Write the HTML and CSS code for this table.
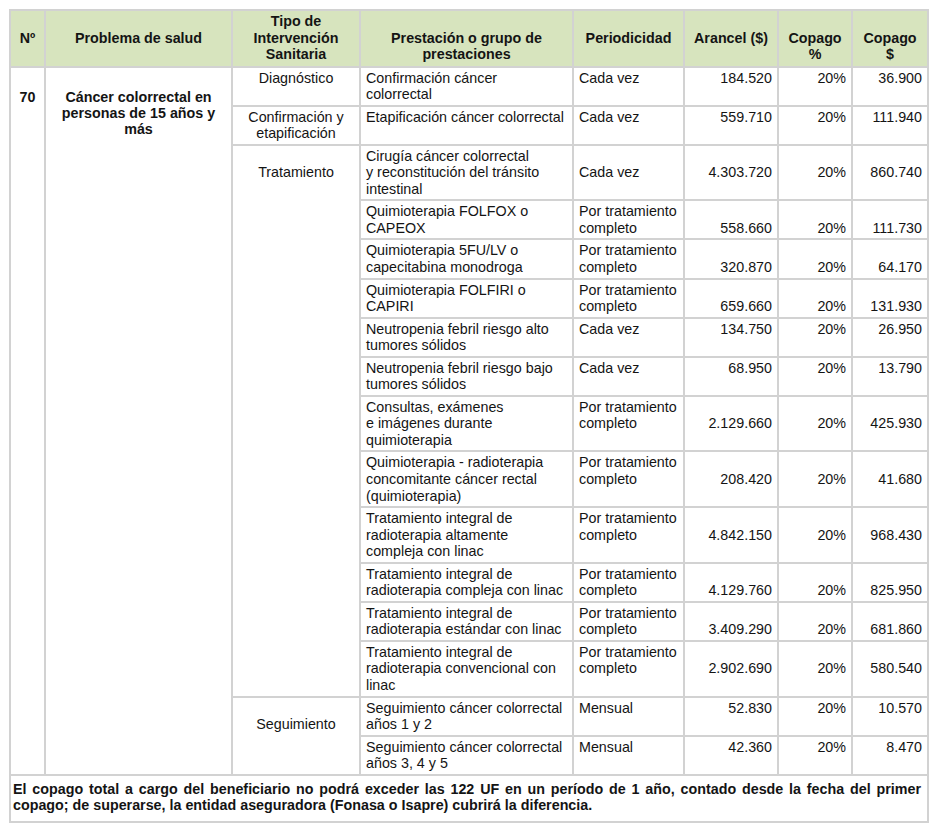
FILE: index.html
```html
<!DOCTYPE html>
<html lang="es">
<head>
<meta charset="utf-8">
<link rel="stylesheet" href="styles.css">
</head>
<body>
<table class="ges">
<colgroup>
<col class="c-n"><col class="c-prob"><col class="c-tipo"><col class="c-prest"><col class="c-per"><col class="c-ar"><col class="c-pct"><col class="c-cop">
</colgroup>
<thead>
<tr>
<th>Nº</th>
<th>Problema de salud</th>
<th>Tipo de<br>Intervención<br>Sanitaria</th>
<th class="bot">Prestación o grupo de<br>prestaciones</th>
<th>Periodicidad</th>
<th>Arancel ($)</th>
<th class="bot">Copago<br>%</th>
<th class="bot">Copago<br>$</th>
</tr>
</thead>
<tbody>
<tr>
<td rowspan="16" class="num-ps">70</td>
<td rowspan="16" class="prob">Cáncer colorrectal en<br>personas de 15 años y<br>más</td>
<td class="tipo">Diagnóstico</td>
<td>Confirmación cáncer<br>colorrectal</td>
<td>Cada vez</td>
<td class="r">184.520</td>
<td class="r">20%</td>
<td class="r">36.900</td>
</tr>
<tr>
<td class="tipo">Confirmación y<br>etapificación</td>
<td>Etapificación cáncer colorrectal</td>
<td>Cada vez</td>
<td class="r">559.710</td>
<td class="r">20%</td>
<td class="r">111.940</td>
</tr>
<tr>
<td rowspan="12" class="tipo"><br>Tratamiento</td>
<td>Cirugía cáncer colorrectal<br>y reconstitución del tránsito<br>intestinal</td>
<td><br>Cada vez</td>
<td class="r"><br>4.303.720</td>
<td class="r"><br>20%</td>
<td class="r"><br>860.740</td>
</tr>
<tr>
<td>Quimioterapia FOLFOX o<br>CAPEOX</td>
<td>Por tratamiento<br>completo</td>
<td class="r"><br>558.660</td>
<td class="r"><br>20%</td>
<td class="r"><br>111.730</td>
</tr>
<tr>
<td>Quimioterapia 5FU/LV o<br>capecitabina monodroga</td>
<td>Por tratamiento<br>completo</td>
<td class="r"><br>320.870</td>
<td class="r"><br>20%</td>
<td class="r"><br>64.170</td>
</tr>
<tr>
<td>Quimioterapia FOLFIRI o<br>CAPIRI</td>
<td>Por tratamiento<br>completo</td>
<td class="r"><br>659.660</td>
<td class="r"><br>20%</td>
<td class="r"><br>131.930</td>
</tr>
<tr>
<td>Neutropenia febril riesgo alto<br>tumores sólidos</td>
<td>Cada vez</td>
<td class="r">134.750</td>
<td class="r">20%</td>
<td class="r">26.950</td>
</tr>
<tr>
<td>Neutropenia febril riesgo bajo<br>tumores sólidos</td>
<td>Cada vez</td>
<td class="r">68.950</td>
<td class="r">20%</td>
<td class="r">13.790</td>
</tr>
<tr>
<td>Consultas, exámenes<br>e imágenes durante<br>quimioterapia</td>
<td>Por tratamiento<br>completo</td>
<td class="r"><br>2.129.660</td>
<td class="r"><br>20%</td>
<td class="r"><br>425.930</td>
</tr>
<tr>
<td>Quimioterapia - radioterapia<br>concomitante cáncer rectal<br>(quimioterapia)</td>
<td>Por tratamiento<br>completo</td>
<td class="r"><br>208.420</td>
<td class="r"><br>20%</td>
<td class="r"><br>41.680</td>
</tr>
<tr>
<td>Tratamiento integral de<br>radioterapia altamente<br>compleja con linac</td>
<td>Por tratamiento<br>completo</td>
<td class="r"><br>4.842.150</td>
<td class="r"><br>20%</td>
<td class="r"><br>968.430</td>
</tr>
<tr>
<td>Tratamiento integral de<br>radioterapia compleja con linac</td>
<td>Por tratamiento<br>completo</td>
<td class="r"><br>4.129.760</td>
<td class="r"><br>20%</td>
<td class="r"><br>825.950</td>
</tr>
<tr>
<td>Tratamiento integral de<br>radioterapia estándar con linac</td>
<td>Por tratamiento<br>completo</td>
<td class="r"><br>3.409.290</td>
<td class="r"><br>20%</td>
<td class="r"><br>681.860</td>
</tr>
<tr>
<td>Tratamiento integral de<br>radioterapia convencional con<br>linac</td>
<td>Por tratamiento<br>completo</td>
<td class="r"><br>2.902.690</td>
<td class="r"><br>20%</td>
<td class="r"><br>580.540</td>
</tr>
<tr>
<td rowspan="2" class="tipo"><br>Seguimiento</td>
<td>Seguimiento cáncer colorrectal<br>años 1 y 2</td>
<td>Mensual</td>
<td class="r">52.830</td>
<td class="r">20%</td>
<td class="r">10.570</td>
</tr>
<tr>
<td>Seguimiento cáncer colorrectal<br>años 3, 4 y 5</td>
<td>Mensual</td>
<td class="r">42.360</td>
<td class="r">20%</td>
<td class="r">8.470</td>
</tr>
</tbody>
<tfoot>
<tr>
<td colspan="8" class="note">
<span class="note-line just">El copago total a cargo del beneficiario no podrá exceder las 122 UF en un período de 1 año, contado desde la fecha del primer</span>
<span class="note-line">copago; de superarse, la entidad aseguradora (Fonasa o Isapre) cubrirá la diferencia.</span>
</td>
</tr>
</tfoot>
</table>
</body>
</html>
```
FILE: styles.css
```css
html, body {
  margin: 0;
  padding: 0;
  background: #ffffff;
}

body {
  font-family: "Liberation Sans", Arial, sans-serif;
  font-size: 14.3px;
  color: #141414;
}

.ges {
  margin: 9px 0 0 9px;
  width: 920px;
  table-layout: fixed;
  border-collapse: collapse;
  line-height: 16.55px;
}

.c-n { width: 35px; }
.c-prob { width: 187px; }
.c-tipo { width: 128px; }
.c-prest { width: 213px; }
.c-per { width: 111px; }
.c-ar { width: 94px; }
.c-pct { width: 74px; }
.c-cop { width: 76px; }

.ges th,
.ges td {
  border: 2px solid #d2d2d2;
  vertical-align: top;
  text-align: left;
  padding: 2px 5px 2px 5px;
  white-space: nowrap;
  overflow: visible;
}

.ges th {
  background: #d7e4be;
  font-weight: bold;
  text-align: center;
  vertical-align: middle;
  line-height: 16.5px;
  padding: 2px 3px 3px;
}

.ges th.bot {
  vertical-align: bottom;
}

.ges td.r {
  text-align: right;
  padding-right: 5px;
}

.ges td.tipo {
  text-align: center;
  padding-left: 3px;
  padding-right: 3px;
}

.ges td.num-ps,
.ges td.prob {
  font-weight: bold;
  text-align: center;
  padding-top: 21px;
  line-height: 16px;
}

.ges td.note {
  font-weight: bold;
  white-space: normal;
  padding: 5px 6px 7px 2px;
}

.note-line {
  display: block;
}

.note-line.just {
  text-align: justify;
  text-align-last: justify;
}
```
